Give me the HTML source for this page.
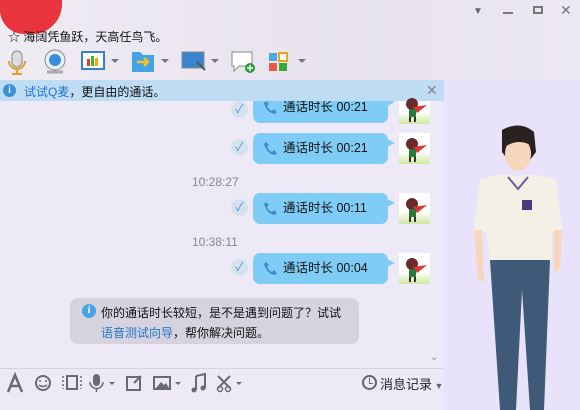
<!DOCTYPE html>
<html><head><meta charset="utf-8"><style>
*{margin:0;padding:0;box-sizing:border-box}
body{width:580px;height:410px;overflow:hidden;position:relative;background:#eee9f7;font-family:"Liberation Sans","Noto Sans CJK SC",sans-serif;font-size:12px;color:#111}
.abs{position:absolute}
.top{left:0;top:0;width:580px;height:80px;background:linear-gradient(90deg,#efebf3,#e8e3ee 60%,#ece8f3)}
.bar{left:0;top:80px;width:444px;height:21px;background:#bfdcf5}
.right{left:444px;top:80px;width:136px;height:330px;background:#e8e3fa}
.bub{left:253px;width:135px;height:31px;background:#7fcdf6;border-radius:7px;font-size:12.5px;line-height:31px;padding-left:30px}
.bub:after{content:"";position:absolute;right:-7px;top:6px;border-left:8px solid #7fcdf6;border-top:4px solid transparent;border-bottom:4px solid transparent}
.ph{position:absolute;left:10px;top:8px;width:14px;height:15px}
.av{left:399px;width:31px;height:31px;background:linear-gradient(#fff 60%,#cfe7a0)}
.chk{left:231px;width:17px;height:17px;border-radius:50%;background:#d5e2ee;color:#4f9ad0;font-size:12px;line-height:17px;text-align:center}
.time{left:192px;color:#888;font-size:12px}
</style></head><body>
<div class="abs top"></div>
<div class="abs" style="left:0;top:0;width:62px;height:34px;background:#e8202a;border-radius:0 0 30px 24px;opacity:.9"></div>
<div class="abs" style="left:8px;top:28px;font-size:12px">☆ 海阔凭鱼跃，天高任鸟飞。</div>
<div class="abs" style="left:473px;top:6px;color:#666;font-size:10px">▼</div>
<div class="abs" style="left:503px;top:6px;width:10px;height:8px;border-bottom:2px solid #777"></div>
<div class="abs" style="left:533px;top:6px;width:10px;height:8px;border:2px solid #777"></div>
<div class="abs" style="left:560px;top:2px;color:#777;font-size:14px">✕</div>
<svg class="abs" style="left:0;top:48px" width="310" height="30">
<rect x="12" y="3" width="10" height="16" rx="5" fill="#ddd" stroke="#888"/><path d="M9 13a8 8 0 0 0 16 0M17 21v5M12 26h10" stroke="#e2a02b" stroke-width="2" fill="none"/>
<circle cx="55" cy="12" r="10" fill="#e8f0f8" stroke="#888"/><circle cx="55" cy="12" r="6" fill="#3a8ed8"/><path d="M47 24h16" stroke="#aaa" stroke-width="3"/>
<rect x="82" y="4" width="22" height="17" fill="#fff" stroke="#3a7ec8" stroke-width="2"/><rect x="87" y="11" width="3" height="7" fill="#e33"/><rect x="91" y="8" width="3" height="10" fill="#3b3"/><rect x="95" y="10" width="3" height="8" fill="#fa0"/>
<path d="M111 11l4 4 4-4z" fill="#777"/>
<path d="M132 4h8l3 3h11v17h-22z" fill="#43a3e6"/><path d="M137 14h10M144 10l4 4-4 4" stroke="#f5c518" stroke-width="2.5" fill="none"/>
<path d="M161 11l4 4 4-4z" fill="#777"/>
<rect x="182" y="4" width="22" height="16" fill="#3a85d0" stroke="#888"/><path d="M197 14l8 8" stroke="#555" stroke-width="2"/>
<path d="M211 11l4 4 4-4z" fill="#777"/>
<path d="M232 4h20v14h-13l-5 5v-5h-2z" fill="#fff" stroke="#888"/><circle cx="250" cy="20" r="5" fill="#2a9d3a"/><path d="M247 20h6M250 17v6" stroke="#fff" stroke-width="1.5"/>
<rect x="269" y="5" width="8" height="8" fill="#4aa8e8"/><rect x="279" y="5" width="8" height="8" fill="#fff" stroke="#f0a020" stroke-width="2"/><rect x="269" y="15" width="8" height="8" fill="#e54"/><rect x="279" y="15" width="8" height="8" fill="#3a3"/>
<path d="M298 11l4 4 4-4z" fill="#777"/>
</svg>
<div class="abs bar"></div>
<div class="abs" style="left:3px;top:84px;width:13px;height:13px;border-radius:50%;background:#3b8fd9;color:#fff;font-size:10px;text-align:center;line-height:13px;font-weight:bold">i</div>
<div class="abs" style="left:24px;top:83px"><span style="color:#1d74c6">试试Q麦</span>，更自由的通话。</div>
<div class="abs" style="left:426px;top:82px;color:#888;font-size:14px">✕</div>
<div class="abs right"></div>
<div class="abs" style="left:0;top:101px;width:444px;height:260px;overflow:hidden">
<div class="abs chk" style="top:0">✓</div><div class="abs bub" style="top:-9px">通话时长 00:21<svg class="ph" viewBox="0 0 14 15"><path d="M3 1l3 3-2 2q2 4 5 5l2-2 3 3-2 2q-8-1-11-11z" fill="#3d8ec8"/></svg></div><div class="abs av" style="top:-8px"></div>
</div>
<div class="abs chk" style="top:139px">✓</div><div class="abs bub" style="top:133px">通话时长 00:21<svg class="ph" viewBox="0 0 14 15"><path d="M3 1l3 3-2 2q2 4 5 5l2-2 3 3-2 2q-8-1-11-11z" fill="#3d8ec8"/></svg></div><div class="abs av" style="top:133px"></div>
<div class="abs time" style="top:175px">10:28:27</div>
<div class="abs chk" style="top:199px">✓</div><div class="abs bub" style="top:193px">通话时长 00:11<svg class="ph" viewBox="0 0 14 15"><path d="M3 1l3 3-2 2q2 4 5 5l2-2 3 3-2 2q-8-1-11-11z" fill="#3d8ec8"/></svg></div><div class="abs av" style="top:193px"></div>
<div class="abs time" style="top:235px">10:38:11</div>
<div class="abs chk" style="top:259px">✓</div><div class="abs bub" style="top:253px">通话时长 00:04<svg class="ph" viewBox="0 0 14 15"><path d="M3 1l3 3-2 2q2 4 5 5l2-2 3 3-2 2q-8-1-11-11z" fill="#3d8ec8"/></svg></div><div class="abs av" style="top:253px"></div>
<svg class="abs" style="left:399px;top:93px" width="31" height="200">
<g id="f"><circle cx="13" cy="11" r="6" fill="#6a2a2a"/><path d="M14 14l14-2-10 8z" fill="#d33"/><rect x="10" y="16" width="7" height="8" fill="#2a7a3a"/><rect x="10" y="24" width="2" height="5" fill="#333"/><rect x="15" y="24" width="2" height="5" fill="#333"/></g>
<use href="#f" y="40"/><use href="#f" y="100"/><use href="#f" y="160"/>
</svg>
<div class="abs" style="left:70px;top:298px;width:289px;height:46px;background:#d6d3df;border-radius:8px"></div>
<div class="abs" style="left:82px;top:304px;width:14px;height:14px;border-radius:50%;background:#4aa3e6;color:#fff;font-size:10px;text-align:center;line-height:14px;font-weight:bold">i</div>
<div class="abs" style="left:101px;top:303px;line-height:20px">你的通话时长较短，是不是遇到问题了？试试<br><span style="color:#1d74c6">语音测试向导</span>，帮你解决问题。</div>
<div class="abs" style="left:430px;top:352px;color:#888;font-size:10px">⌄</div>
<div class="abs" style="left:0;top:368px;width:444px;height:1px;background:#d7d3de"></div>
<svg class="abs" style="left:0;top:372px" width="250" height="24" fill="#6a6a74" stroke="#6a6a74">
<path d="M8 20l7-17 7 17M11 14h8" stroke-width="2.5" fill="none"/>
<circle cx="43" cy="11" r="7" fill="none" stroke-width="2"/><circle cx="40" cy="9" r="1" stroke="none"/><circle cx="46" cy="9" r="1" stroke="none"/><path d="M39 13q4 3 8 0" fill="none" stroke-width="1.5"/>
<rect x="67" y="4" width="10" height="13" fill="none" stroke-width="2"/><path d="M63 4v13M81 4v13" stroke-dasharray="2 2" stroke-width="1.5"/>
<rect x="93" y="2" width="7" height="12" rx="3.5" stroke="none"/><path d="M90 10a6 6 0 0 0 13 0M96.5 16v4" fill="none" stroke-width="1.5"/><path d="M109 10l3 3 3-3z" stroke="none"/>
<rect x="127" y="5" width="13" height="13" fill="none" stroke-width="2"/><path d="M134 11l7-7" stroke-width="2"/>
<rect x="154" y="5" width="16" height="12" fill="none" stroke-width="2"/><path d="M156 16l5-6 3 3 2-2 3 5z" stroke="none"/><path d="M175 10l3 3 3-3z" stroke="none"/>
<path d="M196 4l9-2v14M196 4v14" fill="none" stroke-width="2"/><circle cx="194" cy="18" r="2.5" stroke="none"/><circle cx="203" cy="16" r="2.5" stroke="none"/>
<path d="M218 4l12 12M230 4l-12 12" stroke-width="2"/><circle cx="220" cy="17" r="2.5" fill="none" stroke-width="1.5"/><circle cx="228" cy="17" r="2.5" fill="none" stroke-width="1.5"/><path d="M236 10l3 3 3-3z" stroke="none"/>
</svg>
<div class="abs" style="left:362px;top:375px;width:15px;height:15px;border:2px solid #666;border-radius:50%"></div>
<div class="abs" style="left:369px;top:378px;width:4px;height:6px;border-left:1.5px solid #666;border-bottom:1.5px solid #666"></div>
<div class="abs" style="left:380px;top:374px;font-size:13px;color:#222">消息记录<span style="font-size:9px;color:#666"> ▼</span></div>
<svg class="abs" style="left:460px;top:120px" width="110" height="290">
<path d="M42 10q18-10 32 2l2 20-6 8h-22l-6-8z" fill="#2a2220"/>
<ellipse cx="58" cy="34" rx="13" ry="17" fill="#f6d6bc"/>
<path d="M44 18q14-10 30 2l-2 6q-12-8-26 0z" fill="#2a2220"/>
<path d="M20 60q20-8 38-4 18-4 38 4l6 50-10 2v30H30l-4-30-12-2z" fill="#f3f0e6"/>
<path d="M48 57l10 12 10-12" stroke="#6a5aa0" stroke-width="2" fill="none"/>
<rect x="62" y="80" width="10" height="10" fill="#4a3a80"/>
<path d="M14 110l4 50 6 2-2-52zM102 110l-2 40-6 2 0-42z" fill="#f6d6bc"/>
<path d="M30 140h60l-6 150H70l-8-120-6 120H40z" fill="#3f5a78"/>
</svg>
</body></html>
